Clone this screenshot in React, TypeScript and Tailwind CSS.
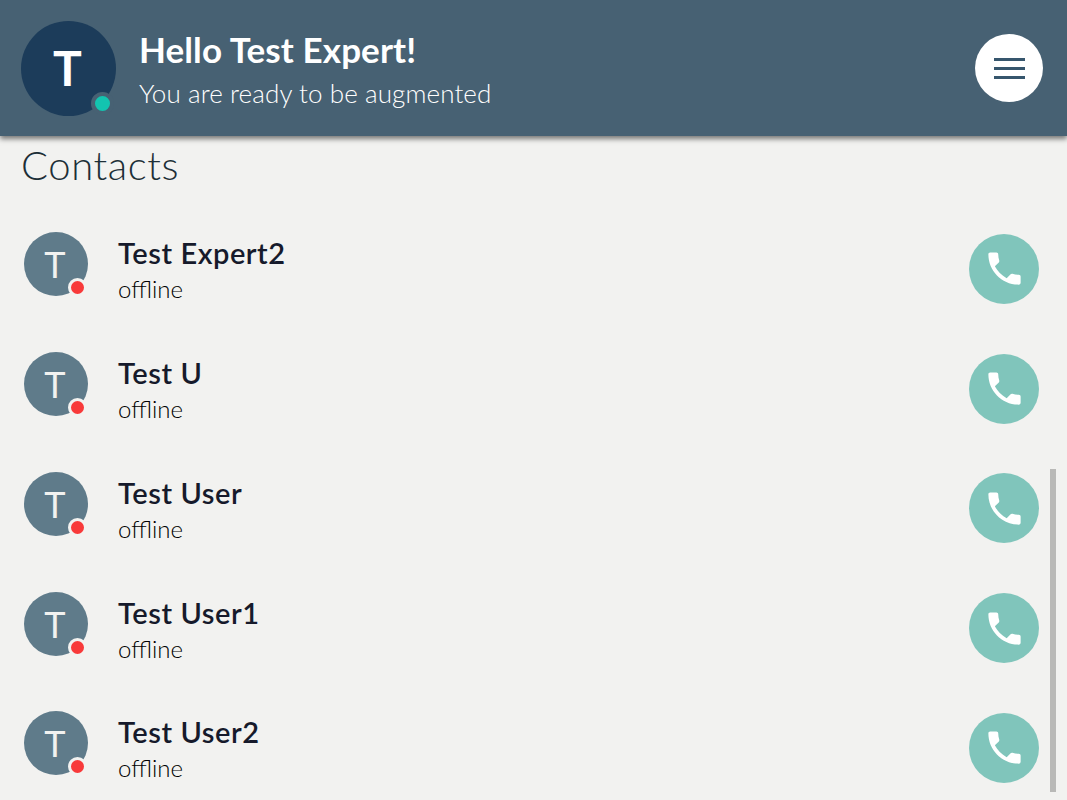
const contacts = ["Test Expert2", "Test U", "Test User", "Test User1", "Test User2"];

function Row({ name }: { name: string }) {
  return (
    <div className="flex h-[119.75px] shrink-0 items-center pl-6 pr-[28px]">
      <div className="relative mb-[9px] flex h-16 w-16 shrink-0 items-center justify-center rounded-full bg-[#5f7b8a] pr-[2px] text-[36px] font-normal text-[#f2f2f0]">
        T
        <span className="absolute bottom-[-1px] right-[1px] h-[19px] w-[19px] rounded-full border-[3px] border-[#f2f2f0] bg-[#f83a3a]" />
      </div>
      <div className="ml-[30px] mt-[5px] flex flex-1 flex-col">
        <div className="text-[29px] leading-[35px] font-semibold tracking-[0.55px] text-[#161a2b]">{name}</div>
        <div className="mt-[1px] text-[24px] leading-[36px] font-light text-black">offline</div>
      </div>
      <button className="flex h-[70px] w-[70px] items-center justify-center rounded-full bg-[#80c5bb]">
        <svg viewBox="0 0 24 24" className="h-[43px] w-[43px] fill-white">
          <path d="M6.62 10.79c1.44 2.83 3.76 5.14 6.59 6.59l2.2-2.2c.27-.27.67-.36 1.02-.24 1.12.37 2.33.57 3.57.57.55 0 1 .45 1 1V20c0 .55-.45 1-1 1-9.39 0-17-7.61-17-17 0-.55.45-1 1-1h3.5c.55 0 1 .45 1 1 0 1.25.2 2.45.57 3.57.11.35.03.74-.25 1.02l-2.2 2.2z" />
        </svg>
      </button>
    </div>
  );
}

export default function App() {
  return (
    <div className="relative flex h-[800px] w-[1067px] flex-col overflow-hidden bg-[#f2f2f0] font-['Lato','Noto_Sans',sans-serif]">
      <header className="z-10 flex h-[136px] shrink-0 items-center bg-[#476173] pl-[21px] pr-6 shadow-[0_3px_5px_rgba(0,0,0,0.5)]">
        <div className="relative flex h-[95px] w-[95px] shrink-0 items-center justify-center rounded-full bg-[#1c3c5a] pr-[2px] text-[48px] font-bold text-white">
          T
          <span className="absolute bottom-[1px] right-[2px] h-[23px] w-[23px] rounded-full border-[4px] border-[#476173] bg-[#13c4b0]" />
        </div>
        <div className="ml-[23px] mt-[2px] flex flex-1 flex-col">
          <div className="text-[35px] leading-[44px] font-bold tracking-[0.1px] text-white">Hello Test Expert!</div>
          <div className="mt-[4px] text-[26px] leading-[36px] font-light tracking-[0.1px] text-white">You are ready to be augmented</div>
        </div>
        <button className="flex h-[68px] w-[68px] flex-col items-center justify-center gap-[6px] rounded-full bg-white">
          <span className="h-[3px] w-[31px] bg-[#36566d]" />
          <span className="h-[3px] w-[31px] bg-[#36566d]" />
          <span className="h-[3px] w-[31px] bg-[#36566d]" />
        </button>
      </header>
      <h1 className="mt-[5px] pl-[21px] text-[40px] leading-[48px] font-light tracking-[0.6px] text-[#1d2f37]">Contacts</h1>
      <div className="mt-[20px] flex flex-col">
        {contacts.map((c) => (
          <Row key={c} name={c} />
        ))}
      </div>
      <div className="absolute left-[1050px] top-[469px] h-[323px] w-[6px] bg-[#b9b9b7]" />
    </div>
  );
}
